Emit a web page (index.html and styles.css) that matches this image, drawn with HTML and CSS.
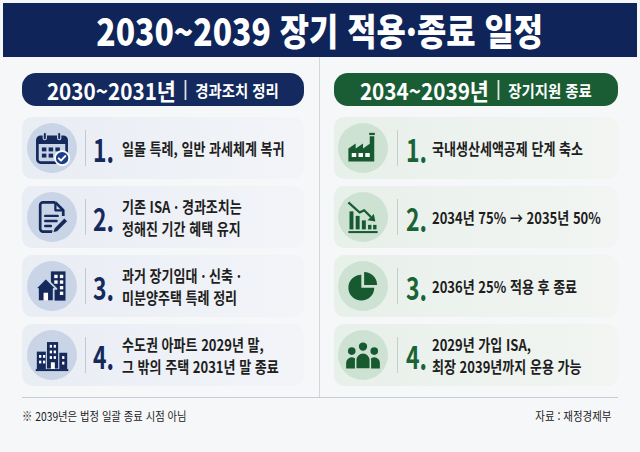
FILE: index.html
```html
<!DOCTYPE html>
<html lang="ko">
<head>
<meta charset="utf-8">
<link rel="stylesheet" href="styles.css">
</head>
<body>
<header class="title-bar"><h1 class="title"><span>2030~2039 장기 적용·종료 일정</span></h1></header>
<main class="board">
  <section class="col col-left">
    <div class="pill pill-navy"><span class="pill-inner"><span class="pill-year">2030~2031년</span><span class="pill-sep"></span><span class="pill-sub">경과조치 정리</span></span></div>
    <ul class="cards">
      <li class="card">
        <span class="icon"><svg viewBox="0 0 32 32">
          <path d="M6 6h20a3 3 0 0 1 3 3v17a3 3 0 0 1-3 3H6a3 3 0 0 1-3-3V9a3 3 0 0 1 3-3z" fill="none" stroke="#15295b" stroke-width="2.4"/>
          <path d="M3 9a3 3 0 0 1 3-3h20a3 3 0 0 1 3 3v3.5H3z" fill="#15295b"/>
          <rect x="8.2" y="2.2" width="2.8" height="6.5" rx="1.4" fill="#15295b" stroke="#c9d5e7" stroke-width="1"/>
          <rect x="21" y="2.2" width="2.8" height="6.5" rx="1.4" fill="#15295b" stroke="#c9d5e7" stroke-width="1"/>
          <rect x="7" y="15.5" width="4" height="3.5" fill="#15295b"/>
          <rect x="13" y="15.5" width="4" height="3.5" fill="#15295b"/>
          <rect x="19" y="15.5" width="4" height="3.5" fill="#15295b"/>
          <rect x="7" y="21" width="4" height="3.5" fill="#15295b"/>
          <rect x="13" y="21" width="4" height="3.5" fill="#15295b"/>
          <circle cx="25" cy="25" r="6.3" fill="#1d3f8a" stroke="#fff" stroke-width="1.6"/>
          <path d="M22 25.2l2 2 3.8-4" fill="none" stroke="#fff" stroke-width="1.8" stroke-linecap="round" stroke-linejoin="round"/>
        </svg></span>
        <span class="vsep"></span>
        <span class="num"><span>1.</span></span>
        <span class="text"><span>일몰 특례, 일반 과세체계 복귀</span></span>
      </li>
      <li class="card">
        <span class="icon"><svg viewBox="0 0 32 32">
          <path d="M19 3H8a2.5 2.5 0 0 0-2.5 2.5v21A2.5 2.5 0 0 0 8 29h9" fill="none" stroke="#15295b" stroke-width="2.4" stroke-linejoin="round"/>
          <path d="M19 3l7 7v5" fill="none" stroke="#15295b" stroke-width="2.4" stroke-linejoin="round"/>
          <path d="M19 3v7h7" fill="none" stroke="#15295b" stroke-width="2" stroke-linejoin="round"/>
          <path d="M10 15h11M10 19.5h10M10 24h5" stroke="#15295b" stroke-width="2.2" stroke-linecap="round"/>
          <path d="M27 16.5l3.3 3.3-9.2 9.2-4.6 1.3 1.3-4.6z" fill="#15295b" stroke="#c9d5e7" stroke-width="1.3" stroke-linejoin="round"/>
        </svg></span>
        <span class="vsep"></span>
        <span class="num"><span>2.</span></span>
        <span class="text two"><span>기존 ISA · 경과조치는</span><span>정해진 기간 혜택 유지</span></span>
      </li>
      <li class="card">
        <span class="icon"><svg viewBox="0 0 32 32">
          <rect x="15" y="3" width="13" height="26" fill="#15295b"/>
          <rect x="18" y="6" width="3" height="3" fill="#fff"/>
          <rect x="23" y="6" width="3" height="3" fill="#fff"/>
          <rect x="18" y="11" width="3" height="3" fill="#fff"/>
          <rect x="23" y="11" width="3" height="3" fill="#fff"/>
          <rect x="23" y="16" width="3" height="3" fill="#fff"/>
          <rect x="23" y="21" width="3" height="3" fill="#fff"/>
          <path d="M1 18.5L10.5 9l9.5 9.5H17.5V29.5H3.5V18.5z" fill="#15295b" stroke="#c9d5e7" stroke-width="1.6" stroke-linejoin="round"/>
          <rect x="8.5" y="22" width="4" height="7" fill="#fff"/>
        </svg></span>
        <span class="vsep"></span>
        <span class="num"><span>3.</span></span>
        <span class="text two"><span>과거 장기임대 · 신축 ·</span><span>미분양주택 특례 정리</span></span>
      </li>
      <li class="card">
        <span class="icon"><svg viewBox="0 0 32 32">
          <rect x="2.5" y="13" width="9" height="15.5" fill="#15295b"/>
          <rect x="11" y="4" width="11" height="24.5" fill="#15295b" stroke="#c9d5e7" stroke-width="1"/>
          <rect x="22.5" y="14" width="7" height="14.5" fill="#15295b"/>
          <rect x="4.5" y="16" width="2" height="2.5" fill="#fff"/><rect x="8" y="16" width="2" height="2.5" fill="#fff"/>
          <rect x="4.5" y="21" width="2" height="2.5" fill="#fff"/><rect x="8" y="21" width="2" height="2.5" fill="#fff"/>
          <rect x="14" y="7" width="2" height="2.5" fill="#fff"/><rect x="17.5" y="7" width="2" height="2.5" fill="#fff"/>
          <rect x="14" y="12" width="2" height="2.5" fill="#fff"/><rect x="17.5" y="12" width="2" height="2.5" fill="#fff"/>
          <rect x="14" y="17" width="2" height="2.5" fill="#fff"/><rect x="17.5" y="17" width="2" height="2.5" fill="#fff"/>
          <rect x="15" y="22.5" width="3.5" height="6" fill="#fff"/>
          <rect x="25" y="17" width="2" height="2.5" fill="#fff"/><rect x="25" y="22" width="2" height="2.5" fill="#fff"/>
          <rect x="1.5" y="28.5" width="29" height="1.8" fill="#15295b"/>
        </svg></span>
        <span class="vsep"></span>
        <span class="num"><span>4.</span></span>
        <span class="text two"><span>수도권 아파트 2029년 말,</span><span>그 밖의 주택 2031년 말 종료</span></span>
      </li>
    </ul>
  </section>
  <section class="col col-right">
    <div class="pill pill-green"><span class="pill-inner"><span class="pill-year">2034~2039년</span><span class="pill-sep"></span><span class="pill-sub">장기지원 종료</span></span></div>
    <ul class="cards">
      <li class="card">
        <span class="icon"><svg viewBox="0 0 32 32">
          <path d="M3 28V16.5l6.5-4.5v4.5l6.5-4.5v4.5l6-4.2V5.5h4V28z" fill="#175a30"/>
          <rect x="21.5" y="2.5" width="5" height="2" fill="#175a30"/>
          <rect x="6" y="20.5" width="4" height="3.5" fill="#fff"/>
          <rect x="12" y="20.5" width="4" height="3.5" fill="#fff"/>
          <rect x="18" y="20.5" width="4" height="3.5" fill="#fff"/>
        </svg></span>
        <span class="vsep"></span>
        <span class="num"><span>1.</span></span>
        <span class="text"><span>국내생산세액공제 단계 축소</span></span>
      </li>
      <li class="card">
        <span class="icon"><svg viewBox="0 0 32 32">
          <rect x="4" y="11" width="3.5" height="16" fill="#175a30"/>
          <rect x="9.5" y="15" width="3.5" height="12" fill="#175a30"/>
          <rect x="15" y="19" width="3.5" height="8" fill="#175a30"/>
          <rect x="20.5" y="23" width="3" height="4" fill="#175a30"/>
          <rect x="25" y="23" width="3" height="4" fill="#175a30"/>
          <rect x="3" y="28.5" width="26" height="1.8" fill="#175a30"/>
          <path d="M3 3l10 9 4-2 6 6" fill="none" stroke="#175a30" stroke-width="2" stroke-linejoin="round"/>
          <path d="M27 20l-7-1.2 5.6-5.4z" fill="#175a30"/>
        </svg></span>
        <span class="vsep"></span>
        <span class="num"><span>2.</span></span>
        <span class="text"><span>2034년 75% → 2035년 50%</span></span>
      </li>
      <li class="card">
        <span class="icon"><svg viewBox="0 0 32 32">
          <path d="M14.5 6A11.5 11.5 0 1 0 26 17.5H14.5z" fill="#175a30"/>
          <path d="M17 3.5V15H28.5A11.5 11.5 0 0 0 17 3.5z" fill="#175a30"/>
        </svg></span>
        <span class="vsep"></span>
        <span class="num"><span>3.</span></span>
        <span class="text"><span>2036년 25% 적용 후 종료</span></span>
      </li>
      <li class="card">
        <span class="icon"><svg viewBox="0 0 32 32">
          <circle cx="6" cy="12.5" r="3.4" fill="#175a30"/>
          <circle cx="26" cy="12.5" r="3.4" fill="#175a30"/>
          <path d="M1 28v-5a5 5 0 0 1 10 0v5z" fill="#175a30"/>
          <path d="M21 28v-5a5 5 0 0 1 10 0v5z" fill="#175a30"/>
          <circle cx="16" cy="8.5" r="4.3" fill="#175a30" stroke="#cde2d3" stroke-width="1.2"/>
          <path d="M9.5 28.5v-8a6.5 6.5 0 0 1 13 0v8z" fill="#175a30" stroke="#cde2d3" stroke-width="1.4"/>
        </svg></span>
        <span class="vsep"></span>
        <span class="num"><span>4.</span></span>
        <span class="text two"><span>2029년 가입 ISA,</span><span>최장 2039년까지 운용 가능</span></span>
      </li>
    </ul>
  </section>
</main>
<footer class="foot"><span class="note">※ 2039년은 법정 일괄 종료 시점 아님</span><span class="src">자료 : 재정경제부</span></footer>
</body>
</html>
```
FILE: styles.css
```css
html, body { margin: 0; padding: 0; }
body {
  width: 640px;
  height: 452px;
  overflow: hidden;
  background: #f6f7f9;
  font-family: "Noto Sans CJK KR", "Noto Sans", sans-serif;
}
.title-bar {
  margin: 3px 3px 0;
  height: 54px;
  background: #0f2459;
  display: flex;
  align-items: center;
  justify-content: center;
}
.title {
  margin: 0;
  color: #fff;
  font-size: 37px;
  font-weight: 900;
  line-height: 1;
}
.title span { display: inline-block; transform: scaleX(0.86); }
.board {
  margin: 0 22px;
  display: grid;
  grid-template-columns: 298px 298px;
  border-bottom: 1px solid #c8ccd4;
}
.col { padding: 16px 0 11px; }
.col-left { padding-right: 15px; border-right: 1px solid #d3d6dc; }
.col-right { padding-left: 14px; }
.pill {
  height: 33px;
  border-radius: 14px;
  display: flex;
  align-items: center;
  justify-content: center;
  color: #fff;
}
.pill-navy { background: #142a5e; }
.pill-green { background: #1a5c34; }
.pill-inner { display: flex; align-items: center; transform: scaleX(0.9); }
.pill-year { font-size: 23px; font-weight: 700; }
.pill-sep { width: 1.5px; height: 20px; background: rgba(255,255,255,0.85); margin: 0 10px; }
.pill-sub { font-size: 16px; font-weight: 700; }
.cards {
  list-style: none;
  margin: 11px 0 0;
  padding: 0;
  display: flex;
  flex-direction: column;
  gap: 7px;
}
.card {
  height: 62px;
  border-radius: 10px;
  display: flex;
  align-items: center;
  padding: 0 5px;
}
.col-left .card { background: linear-gradient(90deg, #e9edf4, #f2f4f8); }
.col-right .card { background: linear-gradient(90deg, #e8f0ea, #f2f5f2); padding-left: 4px; }
.icon {
  width: 50px;
  height: 50px;
  border-radius: 50%;
  display: flex;
  align-items: center;
  justify-content: center;
  flex: none;
}
.col-left .icon { background: #c9d5e7; }
.col-right .icon { background: #cde2d3; }
.icon svg { width: 36px; height: 36px; }
.vsep { width: 1px; height: 36px; background: #c3c9d4; margin: 0 7px 0 8px; flex: none; }
.col-right .vsep { margin: 0 8px 0 9px; background: #c4d0c7; }
.num { width: 29px; flex: none; font-size: 31px; font-weight: 700; line-height: 1; }
.col-right .num { width: 26px; }
.num span { display: inline-block; transform: scaleX(0.74); transform-origin: left center; }
.col-left .num { color: #15295c; }
.col-right .num { color: #1a6336; }
.text {
  display: flex;
  flex-direction: column;
  font-size: 15.5px;
  font-weight: 700;
  color: #1e1e1e;
  line-height: 22.5px;
  white-space: nowrap;
}
.text span { display: block; transform: scaleX(0.84); transform-origin: left center; }
.foot {
  display: flex;
  justify-content: space-between;
  margin: 9px 29px 0 22px;
  font-size: 12px;
  color: #222;
}
.note { display: inline-block; transform: scaleX(0.86); transform-origin: left center; }
.src { display: inline-block; transform: scaleX(0.87); transform-origin: right center; }
```
